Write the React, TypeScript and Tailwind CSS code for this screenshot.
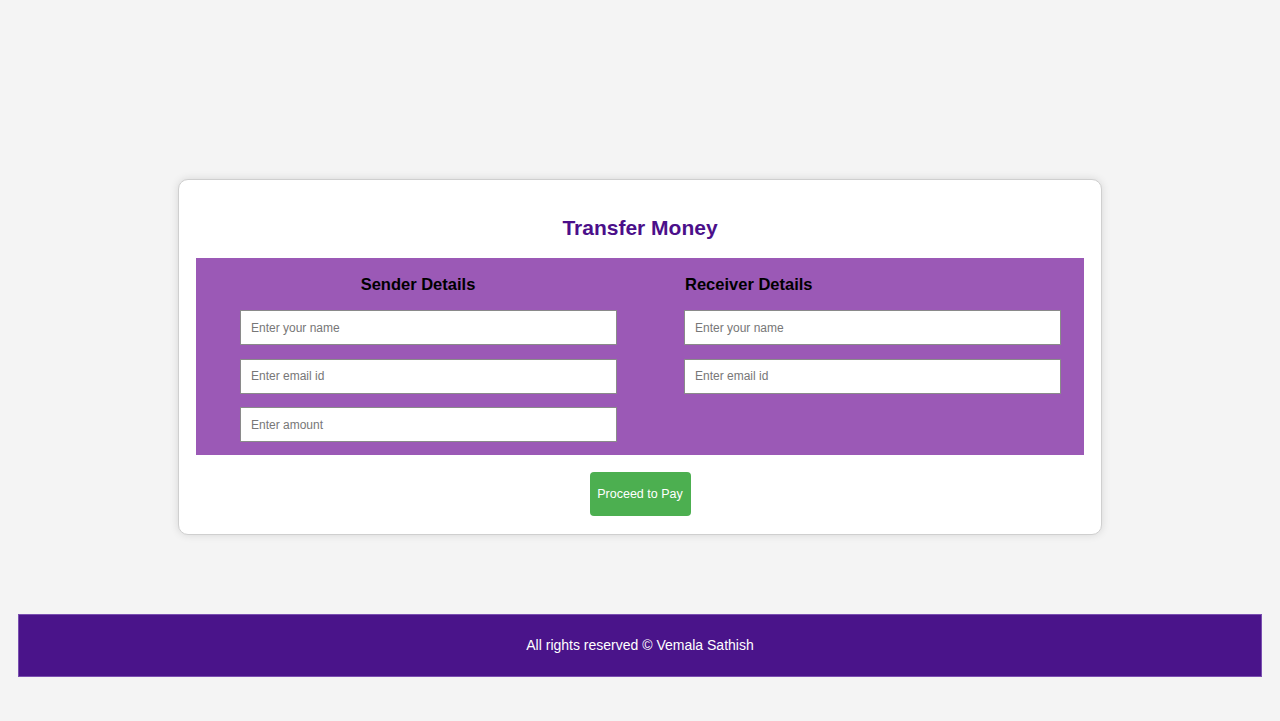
export default function App() {
  const inputClass =
    'ml-[44px] w-[377px] h-[35px] bg-white border border-[#8a8a8a] px-[10px] text-[12px] text-black placeholder:text-[#777] outline-none';

  return (
    <div className="min-h-[721px] bg-[#f4f4f4] font-['Liberation_Sans',Arial,sans-serif] pt-[179px] px-[18px]">
      {/* Transfer card */}
      <div className="mx-auto w-[924px] h-[356px] bg-white border border-[#cfcfcf] rounded-[10px] shadow-[0_0_8px_rgba(0,0,0,0.12)] px-[17px] pt-[35px]">
        <h1 className="text-center text-[21px] leading-[25px] font-bold text-[#4b0f8a]">Transfer Money</h1>

        <div className="mt-[18px] h-[197px] bg-[#9b59b6] flex">
          {/* Sender */}
          <div className="w-[444px] pt-[16px]">
            <h2 className="text-center text-[16.5px] leading-[20px] font-bold text-black">Sender Details</h2>
            <div className="mt-[16px] flex flex-col gap-[13.5px]">
              <input className={inputClass} placeholder="Enter your name" />
              <input className={inputClass} placeholder="Enter email id" />
              <input className={inputClass} placeholder="Enter amount" />
            </div>
          </div>

          {/* Receiver */}
          <div className="w-[444px] pt-[16px]">
            <h2 className="ml-[45px] text-left text-[16.5px] leading-[20px] font-bold text-black">Receiver Details</h2>
            <div className="mt-[16px] flex flex-col gap-[13.5px]">
              <input className={inputClass} placeholder="Enter your name" />
              <input className={inputClass} placeholder="Enter email id" />
            </div>
          </div>
        </div>

        <div className="flex justify-center mt-[17px]">
          <button className="w-[101px] h-[44px] bg-[#4caf50] text-white text-[12.5px] rounded-[4px] whitespace-nowrap">Proceed to Pay</button>
        </div>
      </div>

      {/* Footer */}
      <footer className="mt-[79px] h-[63px] bg-[#4a148a] border border-[#7a4fb0] flex items-center justify-center">
        <p className="text-[14px] text-white">All rights reserved © Vemala Sathish</p>
      </footer>
    </div>
  );
}
